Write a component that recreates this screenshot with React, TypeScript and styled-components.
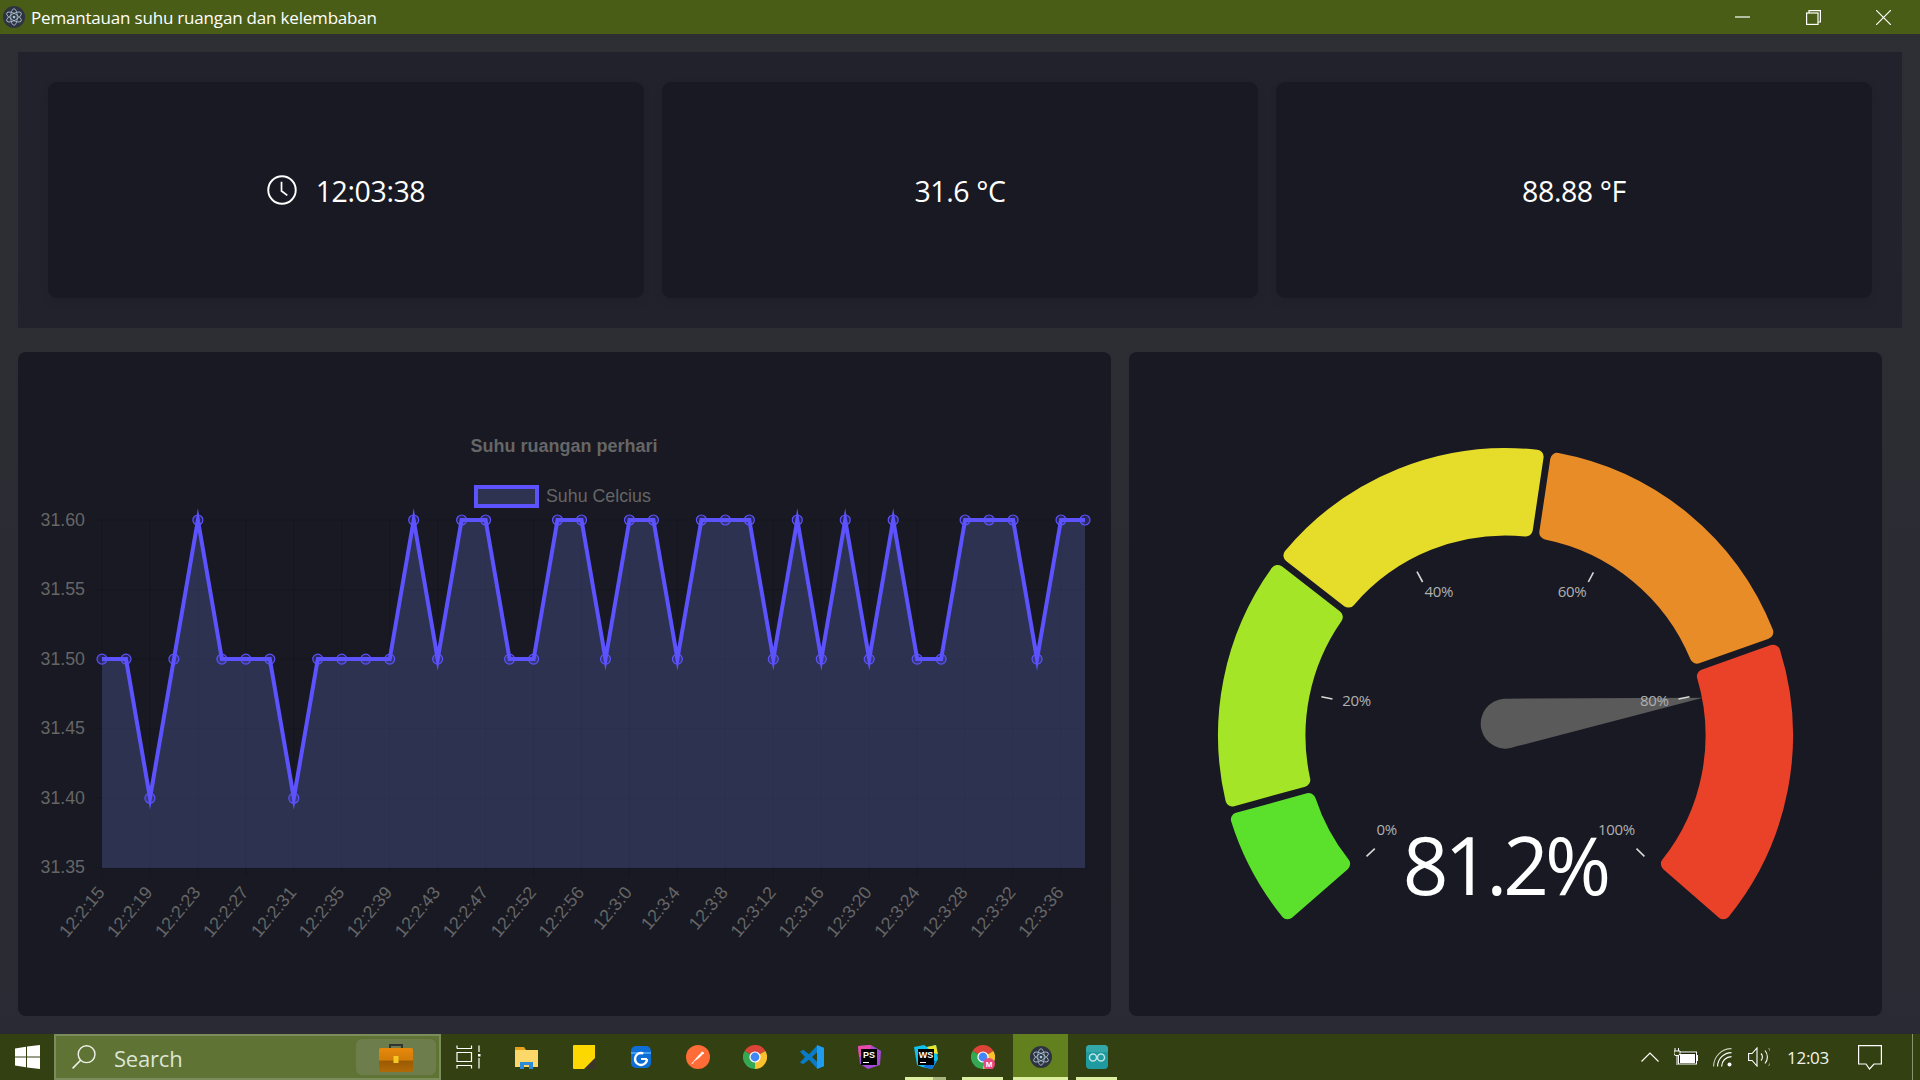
import React from "react";
import styled, { createGlobalStyle } from "styled-components";

const Global = createGlobalStyle`
  html, body { margin: 0; padding: 0; width: 100%; height: 100%; overflow: hidden; background: #2c2e33; }
  #root { width: 100%; height: 100%; }
`;

const UI = `"Open Sans", "Noto Sans", sans-serif`;
const CHART = `"Liberation Sans", Arial, sans-serif`;

const Page = styled.div`
  width: 1920px; height: 1080px; display: flex; flex-direction: column;
  background: linear-gradient(#2e2f33, #292a33); font-family: ${UI}; overflow: hidden;
`;
const TitleBar = styled.header`
  height: 34px; flex: none; display: flex; align-items: center; background: #4a5d16; color: #fff;
  padding-left: 3px;
`;
const TitleText = styled.span`
  margin-left: 6px; font-size: 17px; letter-spacing: -0.19px; white-space: nowrap;
`;
const WindowControls = styled.div`
  margin-left: auto; display: flex; height: 100%; align-items: center; padding-right: 29px; gap: 55.5px;
`;
const Main = styled.main`
  flex: 1; min-height: 0; display: flex; flex-direction: column; padding: 18px 18px 18px;
`;
const StatPanel = styled.section`
  height: 276px; flex: none; display: flex; gap: 18px; padding: 30px;
  background: #21222c; box-sizing: border-box;
`;
const StatCard = styled.div`
  flex: 1; display: flex; align-items: center; justify-content: center; gap: 19px;
  background: #181922; border-radius: 9px; color: #fff; box-shadow: 0 4px 10px rgba(0,0,0,.08);
`;
const StatText = styled.span`
  font-size: 28.5px; letter-spacing: -0.4px; line-height: 1; padding-top: 2px;
`;
const ChartRow = styled.div`
  margin-top: 24px; flex: 1; min-height: 0; display: flex; gap: 18px;
`;
const PlotCard = styled.section<{ $w: number }>`
  flex: none; width: ${p => p.$w}px; background: #181922; border-radius: 8px; overflow: hidden;
  svg { display: block; width: 100%; height: 100%; }
`;
const ChartLabel = styled.text<{ $bold?: boolean }>`
  font-family: ${CHART}; font-size: ${p => (p.$bold ? 18 : 17.8)}px; fill: #666; font-weight: ${p => (p.$bold ? 700 : 400)};
`;
const GaugeTick = styled.text`
  font-family: ${UI}; font-size: 15px; fill: #b0b0b0; letter-spacing: -0.3px;
`;
const GaugeValue = styled.text`
  font-family: ${UI}; font-size: 80px; font-weight: 400; fill: #fff; letter-spacing: -4px;
`;
const Taskbar = styled.footer`
  height: 46px; flex: none; display: flex; background: #334011; color: #fff;
`;
const StartButton = styled.div`
  width: 54px; flex: none; display: flex; align-items: center; justify-content: center; padding-left: 1px; box-sizing: border-box;
`;
const SearchBox = styled.div`
  width: 387px; flex: none; box-sizing: border-box; display: flex; align-items: center;
  background: #5f7335; border: 2px solid #7b8d5b; padding: 0 3px 0 16px;
`;
const SearchLabel = styled.span`
  margin-left: 18px; font-size: 22px; letter-spacing: -0.2px; color: #dde5d5; padding-top: 2px;
`;
const SearchTile = styled.div`
  margin-left: auto; width: 80px; height: 36px; border-radius: 6px; background: #6d7d4c;
  display: flex; align-items: center; justify-content: center;
`;
const TaskSlot = styled.div<{ $active?: boolean; $open?: boolean; $double?: boolean }>`
  position: relative; width: 57px; flex: none; display: flex; align-items: center; justify-content: center;
  ${p => p.$active && `background: #63801f; margin-left: 2px; width: 55px;`}
  ${p => p.$open && `&::after {
    content: ""; position: absolute; bottom: 0; height: 3px;
    left: ${p.$active ? 0 : 8}px; right: ${p.$active ? 0 : 8}px;
    background: ${p.$double ? "linear-gradient(90deg, #dcefa0 68%, #a9b67c 68%)" : "#dcefa0"};
  }`}
`;
const Tray = styled.div`
  margin-left: auto; display: flex; align-items: stretch; padding-right: 7px;
`;
const TraySlot = styled.div<{ $w: number }>`
  width: ${p => p.$w}px; display: flex; align-items: center; justify-content: center;
`;
const TrayClock = styled.span`
  font-size: 17px; letter-spacing: -0.3px; color: #f2f4ec;
`;
const DesktopEdge = styled.div`
  width: 1px; background: #8a9570; margin-left: 12px;
`;
const IconLetters = styled.text`
  font-family: ${CHART}; font-weight: 700; font-size: 9px; fill: #fff;
`;

/* ---------- chart data ---------- */
const values = [.5,.5,.4,.5,.6,.5,.5,.5,.4,.5,.5,.5,.5,.6,.5,.6,.6,.5,.5,.6,.6,.5,.6,.6,.5,.6,.6,.6,.5,.6,.5,.6,.5,.6,.5,.5,.6,.6,.6,.5,.6,.6];
const xLabels = ["12:2:15","12:2:19","12:2:23","12:2:27","12:2:31","12:2:35","12:2:39","12:2:43","12:2:47","12:2:52","12:2:56","12:3:0","12:3:4","12:3:8","12:3:12","12:3:16","12:3:20","12:3:24","12:3:28","12:3:32","12:3:36"];
const X0 = 102, X1 = 1085, STEP = (X1 - X0) / 41;
const YV = (v: number) => 520 + (0.6 - v) * 1391;
const pts = values.map((v, i) => [X0 + i * STEP, YV(v)] as const);
const linePts = pts.map(p => `${p[0].toFixed(1)},${p[1].toFixed(1)}`).join(" ");
const yTicks = [["31.60", .6], ["31.55", .55], ["31.50", .5], ["31.45", .45], ["31.40", .4], ["31.35", .35]] as const;

const LineChart = () => (
  <svg viewBox="18 352 1093 664">
    <ChartLabel x={564} y={452} textAnchor="middle" $bold>Suhu ruangan perhari</ChartLabel>
    <rect x={476} y={487} width={61} height={19} fill="#2d3350" stroke="#5c53ff" strokeWidth={4} />
    <ChartLabel x={546} y={502}>Suhu Celcius</ChartLabel>
    {yTicks.map(([l, v]) => (
      <g key={l}>
        <line x1={94} x2={X1} y1={YV(v)} y2={YV(v)} stroke="rgba(0,0,0,.13)" />
        <ChartLabel x={85} y={YV(v) + 5.5} textAnchor="end">{l}</ChartLabel>
      </g>
    ))}
    {xLabels.map((l, i) => {
      const x = X0 + i * 2 * STEP;
      return (
        <g key={l}>
          <line x1={x} x2={x} y1={520} y2={876} stroke="rgba(0,0,0,.13)" />
          <ChartLabel x={x + 3.5} y={893} textAnchor="end" transform={`rotate(-50 ${x + 3.5} 893)`}>{l}</ChartLabel>
        </g>
      );
    })}
    <polygon points={`${X0},868 ${linePts} ${X1},868`} fill="rgba(108,129,218,.25)" />
    <polyline points={linePts} fill="none" stroke="#5c53ff" strokeWidth={4} strokeLinejoin="miter" strokeMiterlimit={10} />
    {pts.map((p, i) => (
      <circle key={i} cx={p[0]} cy={p[1]} r={5} fill="rgba(90,80,255,.25)" stroke="#5c53ff" strokeWidth={1.2} />
    ))}
  </svg>
);

/* ---------- gauge ---------- */
const CX = 1505.5, CY = 735.5;
const P = (r: number, a: number) => {
  const t = (a * Math.PI) / 180;
  return `${(CX - r * Math.cos(t)).toFixed(1)} ${(CY - r * Math.sin(t)).toFixed(1)}`;
};
const sector = (a0: number, a1: number) => {
  const R = 280.5, r = 207, inset = 7 + 3.4;
  const off = (q: number) => ((inset / q) * 180) / Math.PI;
  return `M${P(R, a0 + off(R))} A${R} ${R} 0 0 1 ${P(R, a1 - off(R))} L${P(r, a1 - off(r))} A${r} ${r} 0 0 0 ${P(r, a0 + off(r))} Z`;
};
const segments = [
  [-41.2, -15.3, "#5be12c"], [-15.3, 37.8, "#a5e527"], [37.8, 98.5, "#e6dc2a"], [98.5, 160.5, "#e88c28"], [160.5, 221.2, "#ea4228"],
] as const;
const ticks = [
  { t: "0%", x: 1386.6, y: 835, l: [1374.8, 848.7, 1366.5, 856.3] },
  { t: "20%", x: 1356.6, y: 706, l: [1321.4, 696.7, 1332.5, 699] },
  { t: "40%", x: 1438.8, y: 597, l: [1417, 571.7, 1422.6, 582] },
  { t: "60%", x: 1572, y: 597, l: [1593.4, 572.3, 1588.3, 582] },
  { t: "80%", x: 1654.3, y: 706, l: [1689.5, 696.7, 1678.5, 699] },
  { t: "100%", x: 1616.4, y: 835, l: [1636.5, 848.7, 1644.4, 856.3] },
];

const Gauge = () => (
  <svg viewBox="1129 352 753 664">
    {segments.map(([a, b, c]) => (
      <path key={c} d={sector(a, b)} fill={c} stroke={c} strokeWidth={14} strokeLinejoin="round" />
    ))}
    <path d="M1504 698.7 L1703 697.7 L1515.6 746.6 A25 25 0 1 1 1504 698.7 Z" fill="#5a5a5a" />
    {ticks.map(k => (
      <g key={k.t}>
        <line x1={k.l[0]} y1={k.l[1]} x2={k.l[2]} y2={k.l[3]} stroke="#d8d8d8" strokeWidth={1.6} />
        <GaugeTick x={k.x} y={k.y} textAnchor="middle">{k.t}</GaugeTick>
      </g>
    ))}
    <GaugeValue x={1505} y={895} textAnchor="middle">81.2%</GaugeValue>
  </svg>
);

/* ---------- icons ---------- */
const Electron = ({ s = 22 }: { s?: number }) => (
  <svg width={s} height={s} viewBox="0 0 24 24">
    <circle cx="12" cy="12" r="12" fill="#2f3241" />
    <g fill="none" stroke="#a9c4d2" strokeWidth=".9">
      <ellipse cx="12" cy="12" rx="9" ry="3.6" transform="rotate(30 12 12)" />
      <ellipse cx="12" cy="12" rx="9" ry="3.6" transform="rotate(90 12 12)" />
      <ellipse cx="12" cy="12" rx="9" ry="3.6" transform="rotate(150 12 12)" />
    </g>
    <circle cx="12" cy="12" r="1.5" fill="#a9c4d2" />
  </svg>
);
const MinIcon = () => <svg width="15" height="2" viewBox="0 0 15 2"><path d="M0 1h15" stroke="#fff" strokeWidth="1.2" /></svg>;
const RestoreIcon = () => (
  <svg width="15" height="15" viewBox="0 0 15 15" fill="none" stroke="#fff" strokeWidth="1.2">
    <rect x=".6" y="3" width="11.4" height="11.4" />
    <path d="M3 3V.6h11.4V12H12" />
  </svg>
);
const CloseIcon = () => <svg width="15" height="15" viewBox="0 0 15 15"><path d="M0 0l15 15M15 0L0 15" stroke="#fff" strokeWidth="1.2" /></svg>;
const Clock = () => (
  <svg width="30" height="30" viewBox="0 0 31 31" fill="none" stroke="#fff" strokeWidth="2">
    <circle cx="15.5" cy="15.5" r="14.2" />
    <path d="M15 7v9.5l6 4.5" strokeWidth="1.8" />
  </svg>
);
const WinLogo = () => (
  <svg width="25" height="24" viewBox="0 0 25 24" fill="#fff">
    <path d="M0 3.4L11 1.8V11.4H0zM12 1.6L25 0V11.4H12zM0 12.6H11V22.2L0 20.6zM12 12.6H25V24L12 22.4z" />
  </svg>
);
const SearchGlass = () => (
  <svg width="24" height="24" viewBox="0 0 24 24" fill="none" stroke="#eef1e8" strokeWidth="1.4">
    <circle cx="14.6" cy="9.2" r="8.4" />
    <path d="M8.6 15.2L.6 23.4" strokeWidth="1.6" />
  </svg>
);
const Briefcase = () => (
  <svg width="34" height="29" viewBox="0 0 34 29">
    <defs>
      <linearGradient id="bc" x1="0" y1="0" x2="0" y2="1">
        <stop offset="0" stopColor="#e8890c" /><stop offset=".5" stopColor="#d07c08" /><stop offset=".55" stopColor="#9c5a04" /><stop offset="1" stopColor="#b06a06" />
      </linearGradient>
    </defs>
    <path d="M11 5V2h12v3" fill="none" stroke="#333" strokeWidth="2" />
    <rect x="0" y="5" width="34" height="24" rx="2" fill="url(#bc)" />
    <rect x="14.5" y="13" width="5" height="7" fill="#f6c922" />
  </svg>
);
const TaskView = () => (
  <svg width="28" height="24" viewBox="0 0 28 24" fill="none" stroke="#fff" strokeWidth="1.2">
    <path d="M1 3.5V.5M1 3.5H15.5V.5M1 7.5H15.5V16.5H1ZM1 23.5V20.5H15.5V23.5M23 .5V7M23 13V23.5" />
    <rect x="22" y="9" width="2.5" height="2.5" fill="#fff" stroke="none" />
  </svg>
);
const Folder = () => (
  <svg width="23" height="24" viewBox="0 0 23 24">
    <path d="M0 2h9l2 3H0z" fill="#e5a21b" />
    <rect x="0" y="5" width="23" height="17" fill="#fbd869" />
    <path d="M5 17h13v7h-4v-4H9v4H5z" fill="#2b8bd8" />
  </svg>
);
const Sticky = () => (
  <svg width="22" height="24" viewBox="0 0 22 24">
    <path d="M1 0h21v16l-8 8H1a1 1 0 0 1-1-1V1a1 1 0 0 1 1-1z" fill="#fcd800" />
    <path d="M22 13v11H11z" fill="#3a3526" />
  </svg>
);
const BlueG = () => (
  <svg width="22" height="24" viewBox="0 0 22 24">
    <rect x="1" y="1" width="20" height="22" rx="5" fill="#0d6fd6" />
    <rect x="1" y="7" width="20" height="2" fill="#46a0f0" />
    <circle cx="11" cy="14" r="6" fill="none" stroke="#fff" strokeWidth="2.4" strokeDasharray="30 8" />
    <path d="M11 14h6" stroke="#fff" strokeWidth="2" />
  </svg>
);
const Postman = () => (
  <svg width="24" height="24" viewBox="0 0 24 24">
    <circle cx="12" cy="12" r="12" fill="#ff6c37" />
    <path d="M6 18l6-7 4-4 2 1-5 5z" fill="#fff" />
    <path d="M15 7a2 2 0 0 1 3 2l-2 0z" fill="#fff" />
    <path d="M5 19l3-1-1-1z" fill="#fff" />
  </svg>
);
const Chrome = ({ badge }: { badge?: boolean }) => (
  <svg width="24" height="24" viewBox="0 0 24 24">
    <path d="M12 12L1.6 6A12 12 0 0 1 22.4 6z" fill="#db4437" />
    <path d="M12 12L22.4 6A12 12 0 0 1 12 24z" fill="#fbc02d" />
    <path d="M12 12L12 24A12 12 0 0 1 1.6 6z" fill="#34a853" />
    <circle cx="12" cy="12" r="5.6" fill="#fff" />
    <circle cx="12" cy="12" r="4.4" fill="#4285f4" />
    {badge && <>
      <circle cx="18" cy="19" r="6" fill="#e8477f" />
      <IconLetters x="18" y="22" textAnchor="middle" style={{ fontSize: 8 }}>M</IconLetters>
    </>}
  </svg>
);
const VSCode = () => (
  <svg width="24" height="24" viewBox="0 0 24 24">
    <path d="M17.5 0L9 9.2 3.2 4.8 0 6.6 5 12 0 17.4 3.2 19.2 9 14.8 17.5 24 18 17.5 12 12 18 6.5z" fill="#0a7bc7" />
    <path d="M17 0L24 2.8V21.2L17 24z" fill="#1f9cf0" />
  </svg>
);
const PS = () => (
  <svg width="24" height="24" viewBox="0 0 24 24">
    <path d="M1 1L14 0 24 6 23 20 11 24 3 19z" fill="#a24bd6" />
    <path d="M1 1L14 0 13 8 2 12z" fill="#e84aa8" />
    <rect x="4" y="4" width="16" height="16" fill="#000" />
    <IconLetters x="12" y="12.5" textAnchor="middle">PS</IconLetters>
    <rect x="6" y="17" width="6" height="1" fill="#fff" />
  </svg>
);
const WS = () => (
  <svg width="24" height="24" viewBox="0 0 24 24">
    <path d="M0 2L10 0 13 2 22 0 24 14 18 24 8 22 3 20z" fill="#11c1ee" />
    <path d="M13 2L22 0 24 9 18 8z" fill="#e9e430" />
    <path d="M10 22L18 24 22 16 14 14z" fill="#1070e0" />
    <rect x="4" y="4" width="16" height="16" fill="#000" />
    <IconLetters x="12" y="12.5" textAnchor="middle">WS</IconLetters>
    <rect x="6" y="17" width="6" height="1" fill="#fff" />
  </svg>
);
const Arduino = () => (
  <svg width="22" height="24" viewBox="0 0 22 24">
    <rect width="22" height="24" rx="4" fill="#1f9aa0" />
    <path d="M0 4a4 4 0 0 1 4-4h14a4 4 0 0 1 4 4v3H0z" fill="#32a9a8" />
    <g fill="none" stroke="#b8e4e0" strokeWidth="1.5">
      <circle cx="7" cy="12.5" r="3.5" /><circle cx="15" cy="12.5" r="3.5" />
    </g>
  </svg>
);
const Chevron = () => <svg width="18" height="10" viewBox="0 0 18 10"><path d="M.5 9.5L9 1l8.5 8.5" fill="none" stroke="#fff" strokeWidth="1.2" /></svg>;
const Battery = () => (
  <svg width="24" height="18" viewBox="0 0 24 18" fill="none" stroke="#fff" strokeWidth="1">
    <rect x="4.5" y="4" width="18" height="12" fill="#1f2608" />
    <rect x="6" y="6" width="15" height="9" fill="#fff" stroke="none" />
    <rect x="23" y="7" width="1" height="6" fill="#fff" stroke="none" />
    <path d="M1 0v3M4.5 0v3M0 3h6v2.5a2 2 0 0 1-2 2H2a2 2 0 0 1-2-2zM3 7.5V17" fill="#334011" />
  </svg>
);
const Wifi = () => (
  <svg width="19" height="19" viewBox="0 0 19 19" fill="none" stroke="#fff" strokeWidth="1.1">
    <path d="M.6 18.5A17.9 17.9 0 0 1 18.5 .6" stroke="#c9cfbb" />
    <path d="M4.6 18.5A13.9 13.9 0 0 1 18.5 4.6" />
    <path d="M8.6 18.5A9.9 9.9 0 0 1 18.5 8.6" />
    <circle cx="16.5" cy="16.5" r="2" fill="#fff" stroke="none" />
  </svg>
);
const Volume = () => (
  <svg width="22" height="20" viewBox="0 0 22 20" fill="none" stroke="#fff" strokeWidth="1.1">
    <path d="M.6 6.5h3.5L9 1v18L4.1 13.5H.6z" />
    <path d="M13 6.5a5 5 0 0 1 0 7" />
    <path d="M17 3.5a10 10 0 0 1 0 13" />
    <path d="M20.5 1a15 15 0 0 1 0 18" stroke="#8a9570" />
  </svg>
);
const Notify = () => (
  <svg width="24" height="25" viewBox="0 0 24 25" fill="none" stroke="#fff" strokeWidth="1.2">
    <path d="M.6 .6H23.4V19H16L11.5 24 8 19H.6Z" />
  </svg>
);

export default function App() {
  return (
    <Page>
      <Global />
      <TitleBar>
        <Electron />
        <TitleText>Pemantauan suhu ruangan dan kelembaban</TitleText>
        <WindowControls>
          <MinIcon /><RestoreIcon /><CloseIcon />
        </WindowControls>
      </TitleBar>
      <Main>
        <StatPanel>
          <StatCard><Clock /><StatText>12:03:38</StatText></StatCard>
          <StatCard><StatText>31.6 °C</StatText></StatCard>
          <StatCard><StatText>88.88 °F</StatText></StatCard>
        </StatPanel>
        <ChartRow>
          <PlotCard $w={1093}><LineChart /></PlotCard>
          <PlotCard $w={753}><Gauge /></PlotCard>
        </ChartRow>
      </Main>
      <Taskbar>
        <StartButton><WinLogo /></StartButton>
        <SearchBox>
          <SearchGlass />
          <SearchLabel>Search</SearchLabel>
          <SearchTile><Briefcase /></SearchTile>
        </SearchBox>
        <TaskSlot><TaskView /></TaskSlot>
        <TaskSlot><Folder /></TaskSlot>
        <TaskSlot><Sticky /></TaskSlot>
        <TaskSlot><BlueG /></TaskSlot>
        <TaskSlot><Postman /></TaskSlot>
        <TaskSlot><Chrome /></TaskSlot>
        <TaskSlot><VSCode /></TaskSlot>
        <TaskSlot><PS /></TaskSlot>
        <TaskSlot $open $double><WS /></TaskSlot>
        <TaskSlot $open><Chrome badge /></TaskSlot>
        <TaskSlot $open $active><Electron /></TaskSlot>
        <TaskSlot $open><Arduino /></TaskSlot>
        <Tray>
          <TraySlot $w={36}><Chevron /></TraySlot>
          <TraySlot $w={36}><Battery /></TraySlot>
          <TraySlot $w={37}><Wifi /></TraySlot>
          <TraySlot $w={35}><Volume /></TraySlot>
          <TraySlot $w={64}><TrayClock>12:03</TrayClock></TraySlot>
          <TraySlot $w={60}><Notify /></TraySlot>
          <DesktopEdge />
        </Tray>
      </Taskbar>
    </Page>
  );
}
